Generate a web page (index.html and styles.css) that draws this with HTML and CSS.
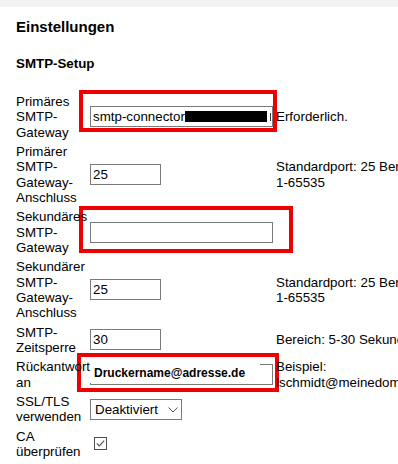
FILE: index.html
```
<!DOCTYPE html>
<html lang="de">
<head>
    <meta charset="UTF-8">
    <meta name="viewport" content="width=device-width, initial-scale=1.0">
    <title>Einstellungen</title>
    <link rel="stylesheet" href="styles.css">
</head>
<body>
    <div class="topbar"></div>

    <main class="page">
        <h1 class="page-title">Einstellungen</h1>
        <h2 class="section-title">SMTP-Setup</h2>

        <div class="settings">
            <div class="label">Primäres SMTP-Gateway</div>
            <div class="field"><input class="text-input wide" type="text" value="smtp-connector-"></div>
            <div class="hint">Erforderlich.</div>

            <div class="label">Primärer SMTP-Gateway-Anschluss</div>
            <div class="field"><input class="text-input short" type="text" value="25"></div>
            <div class="hint">Standardport: 25 Bereich: <span class="nowrap">1-65535</span></div>

            <div class="label">Sekundäres SMTP-Gateway</div>
            <div class="field"><input class="text-input wide" type="text" value=""></div>
            <div class="hint"></div>

            <div class="label">Sekundärer SMTP-Gateway-Anschluss</div>
            <div class="field"><input class="text-input short" type="text" value="25"></div>
            <div class="hint">Standardport: 25 Bereich: <span class="nowrap">1-65535</span></div>

            <div class="label">SMTP-Zeitsperre</div>
            <div class="field"><input class="text-input short" type="text" value="30"></div>
            <div class="hint">Bereich: 5-30 Sekunden</div>

            <div class="label">Rückantwort an</div>
            <div class="field"><input class="text-input wide" type="text" value=""></div>
            <div class="hint">Beispiel: lschmidt@meinedomain.de</div>

            <div class="label">SSL/TLS verwenden</div>
            <div class="field">
                <span class="select-wrap">
                    <select class="select">
                        <option>Deaktiviert</option>
                        <option>Aktiviert</option>
                    </select>
                    <svg class="chevron" width="10" height="6" viewBox="0 0 10 6"><path d="M0.5 0.5 L5 5 L9.5 0.5" fill="none" stroke="#555" stroke-width="1"/></svg>
                </span>
            </div>
            <div class="hint"></div>

            <div class="label">CA überprüfen</div>
            <div class="field">
                <span class="checkbox">
                    <svg width="11" height="11" viewBox="0 0 11 11"><path d="M1.8 5.3 L4.3 7.8 L9.2 2.6" fill="none" stroke="#555" stroke-width="1.2"/></svg>
                </span>
            </div>
            <div class="hint"></div>

            <!-- annotations drawn over the form -->
            <div class="redact"></div>
            <div class="redact-tick"></div>
            <div class="mark mark-primary"></div>
            <div class="mark mark-secondary"></div>
            <div class="mark mark-reply"></div>
            <div class="note">Druckername@adresse.de</div>
        </div>
    </main>
</body>
</html>
```

FILE: styles.css
```
html, body {
    overflow: hidden;
}

body {
    margin: 0;
    font-family: "Liberation Sans", Arial, sans-serif;
    color: #000;
    background-color: #fff;
}

.topbar {
    height: 7px;
    background-color: #f2f2f2;
}

.page {
    padding-left: 16px;
}

.page-title {
    margin: 11px 0 0;
    font-size: 15px;
    line-height: 18px;
    font-weight: bold;
}

.section-title {
    margin: 20px 0 0;
    font-size: 13.33px;
    line-height: 16px;
    font-weight: bold;
}

.settings {
    position: relative;
    margin-top: 22px;
    display: grid;
    grid-template-columns: 70px 183px 180px;
    column-gap: 4px;
    row-gap: 4px;
    align-items: center;
    width: 441px;
    font-size: 13.33px;
    line-height: 15.33px;
}

.settings .hint {
    margin-left: -1px;
}

.label,
.hint {
    position: relative;
    z-index: 2;
}

.nowrap {
    white-space: nowrap;
}

.field {
    display: flex;
    align-items: center;
}

.text-input {
    box-sizing: border-box;
    height: 21px;
    margin: 0;
    padding: 0 2px;
    border: 1px solid #7a7a7a;
    font-family: "Liberation Sans", Arial, sans-serif;
    font-size: 13.33px;
    color: #000;
    background-color: #fff;
}

.text-input.wide {
    width: 183px;
}

.text-input.short {
    width: 71px;
}

.select-wrap {
    position: relative;
    display: inline-block;
}

.select {
    appearance: none;
    -webkit-appearance: none;
    box-sizing: border-box;
    width: 92px;
    height: 21px;
    margin: 0;
    padding: 0 0 0 4px;
    border: 1px solid #7a7a7a;
    border-radius: 0;
    background-color: #fff;
    font-family: "Liberation Sans", Arial, sans-serif;
    font-size: 13.33px;
    color: #000;
}

.chevron {
    position: absolute;
    left: 78px;
    top: 8px;
    pointer-events: none;
}

.checkbox {
    box-sizing: border-box;
    display: inline-flex;
    align-items: center;
    justify-content: center;
    width: 13px;
    height: 13px;
    margin-left: 4px;
    border: 1px solid #4f4f4f;
    background-color: #fff;
}

.redact {
    position: absolute;
    left: 169px;
    top: 17px;
    width: 82px;
    height: 11px;
    background-color: #000;
}

.redact-tick {
    position: absolute;
    left: 254px;
    top: 19px;
    width: 1px;
    height: 8px;
    background-color: #333;
}

.mark {
    position: absolute;
    box-sizing: border-box;
    border: 4px solid #ee0000;
    z-index: 1;
}

.mark-primary {
    left: 63px;
    top: -4px;
    width: 198px;
    height: 42px;
}

.mark-secondary {
    left: 63px;
    top: 112px;
    width: 214px;
    height: 47px;
}

.mark-reply {
    left: 61px;
    top: 259px;
    width: 202px;
    height: 39px;
}

.note {
    position: absolute;
    z-index: 1;
    left: 65px;
    top: 263px;
    width: 179px;
    height: 26px;
    box-sizing: border-box;
    padding: 9px 0 0 13px;
    background-color: #fff;
    font-size: 12px;
    line-height: 14px;
    font-weight: bold;
}
```
